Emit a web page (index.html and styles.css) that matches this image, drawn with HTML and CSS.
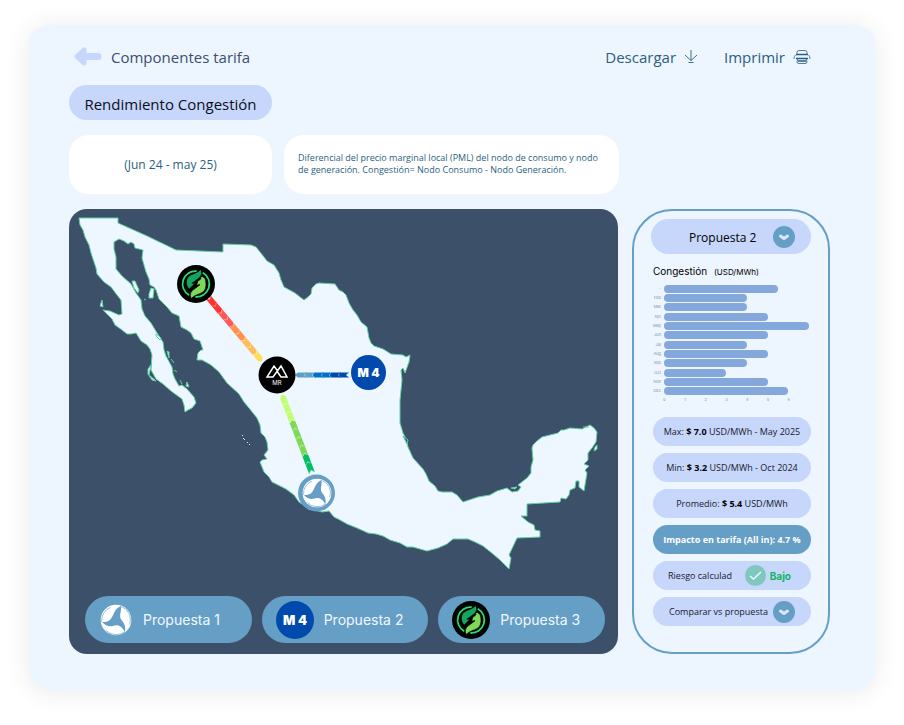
FILE: index.html
```html
<!DOCTYPE html>
<html lang="es">
<head>
<meta charset="utf-8">
<meta name="viewport" content="width=device-width, initial-scale=1">
<title>Rendimiento Congestión</title>
<link rel="stylesheet" href="styles.css">
</head>
<body>
<svg class="sprites" aria-hidden="true">
  <symbol id="logo-leaf" viewBox="-56 -56 112 112">
    <circle r="56" fill="#000"/>
    <path d="M2 -38 A38 38 0 0 0 -20 33 M-2 38 A38 38 0 0 0 20 -33" fill="none" stroke="#1fe07a" stroke-width="5"/>
    <path d="M14 -43 C20 -30 15 -21 5 -15 L-12 -2 L-2 -3 L-20 15 C-31 4 -31 -12 -22 -22 C-14 -30 6 -32 14 -43Z" fill="#12a65f" stroke="#000" stroke-width="2"/>
    <path d="M-14 43 C-20 30 -15 21 -5 15 L12 2 L2 3 L6 -10 C14 -12 17 -17 12 -22 C20 -24 29 -18 29 -6 C31 8 28 18 20 24 C10 31 -6 32 -14 43Z" fill="#7ed957" stroke="#000" stroke-width="2"/>
  </symbol>
  <symbol id="logo-m4" viewBox="-56 -56 112 112">
    <circle r="56" fill="#004aad"/>
    <text class="m4-text" x="0" y="14" text-anchor="middle">M 4</text>
  </symbol>
  <symbol id="logo-rotor" viewBox="-47 -47 94 94">
    <circle r="45" fill="#fff"/>
    <path d="M14 -41 C17 -26 9 -15 14 -4 C19 5 31 13 26 36 C17 16 3 13 -8 17 C-20 21 -31 17 -41 6 C-29 7 -19 5 -12 -8 C-5 -20 -4 -32 14 -41Z" fill="#659fc5"/>
    <path d="M14 -40 A41 41 0 0 1 40 13 M26 35 A43 43 0 0 1 -30 30 M-42 6 A41 41 0 0 1 -16 -37" fill="none" stroke="#659fc5" stroke-width="2"/>
  </symbol>
  <symbol id="icon-heart" viewBox="0 0 22 22">
    <circle cx="11" cy="11" r="11" fill="#659fc5"/>
    <path d="M7.500 10 L11 12.500 L14.500 10" fill="none" stroke="#dbe6ff" stroke-width="3" stroke-linecap="round" stroke-linejoin="round"/>
  </symbol>
  <symbol id="chevron" viewBox="0 -3 12 6" overflow="visible">
    <path d="M0 -3 H9.300 L12 0 L9.300 3 H0 L2.700 0Z"/>
    <path d="M.8 -2.200 L3 0 L.8 2.200" fill="none" stroke="#fff" stroke-opacity=".5" stroke-width=".7"/>
  </symbol>
</svg>

<main class="card">
  <header class="topbar">
    <a class="back" href="#">
      <svg width="28" height="20" viewBox="0 0 28 20" aria-hidden="true"><path d="M3 9.500 L10 3 V16Z" fill="#c7d6fb" stroke="#c7d6fb" stroke-width="5" stroke-linejoin="round"/><path d="M8 9.500 H24" stroke="#c7d6fb" stroke-width="7" stroke-linecap="round"/></svg>
      <span>Componentes tarifa</span>
    </a>
    <div class="actions">
      <button type="button">Descargar
        <svg width="14" height="16" viewBox="0 0 14 16" aria-hidden="true"><path d="M7 1 V11.500 M1 6 L7 11.500 L13 6 M4.500 13.500 H9.500" fill="none" stroke="currentColor" stroke-width=".9"/></svg>
      </button>
      <button type="button">Imprimir
        <svg width="18" height="16" viewBox="0 0 18 16" aria-hidden="true"><g fill="none" stroke="currentColor"><path d="M4 5 V3.500 Q4 1.500 6 1.500 H12 Q14 1.500 14 3.500 V5" stroke-width=".8"/><path d="M3 5.500 H15" stroke-width="1.500"/><path d="M2.500 6 Q1 7 1 10 M15.500 6 Q17 7 17 10" stroke-width=".8"/><path d="M3 9.500 H15 M5 12 H13" stroke-width="1.500"/><path d="M5 9 L4 13 Q4 14.500 6 14.500 H12 Q14 14.500 14 13 L13 9" stroke-width=".8"/></g></svg>
      </button>
    </div>
  </header>

  <h1 class="title">Rendimiento Congestión</h1>

  <section class="info">
    <p class="period">(Jun 24 - may 25)</p>
    <p class="note">Diferencial del precio marginal local (PML) del nodo de consumo y nodo de generación. Congestión= Nodo Consumo - Nodo Generación.</p>
  </section>

  <div class="content">
    <section class="map-panel">
      <svg class="map" viewBox="69 209 549 387" role="img" aria-label="Mapa de nodos">
        <g fill="#eef6ff" stroke="#5fd3a0" stroke-width="1" stroke-linejoin="round">
          <path d="M79 218 L118 218 118 223 147 236 176 250 223 252 223 244 251 245 256 247 264 257 267 261 274 265 279 273 281 280 284 287 295 293 300 297 304 300 308 297 311 294 312 288 316 284 319 283 335 284 339 290 343 292 346 295 349 303 353 310 357 315 361 322 367 327 369 338 371 343 374 346 383 349 391 354 403 355 406 357 410 355 409 362 405 373 403 368 401 370 402 380 400 400 400 423 403 433 406 439 408 447 413 458 423 469 426 474 429 481 435 486 438 491 442 492 452 492 457 495 463 502 478 497 490 495 497 491 507 488 512 492 518 491 521 487 518 485 527 478 531 473 531 467 533 460 532 448 533 445 537 441 542 437 558 433 561 430 564 430 570 428 582 429 590 425 594 428 597 432 596 442 592 448 588 453 588 460 584 464 589 466 585 470 587 473 584 491 579 487 579 481 576 481 575 488 570 490 569 495 566 499 561 498 560 502 527 504 527 516 521 516 528 522 534 525 535 530 540 531 540 537 517 538 509 555 511 558 509 569 500 560 493 554 483 546 475 542 468 539 453 539 447 544 438 548 427 551 413 547 407 547 400 543 390 540 383 536 376 534 368 533 357 528 347 524 340 520 334 517 329 511 322 512 308 508 299 502 294 495 286 489 272 482 269 477 264 472 260 462 262 460 267 459 264 455 268 450 267 442 265 437 261 433 260 425 257 418 249 408 244 402 239 394 227 383 219 372 211 365 202 360 197 360 198 353 201 350 203 350 200 341 194 339 191 333 187 330 181 327 179 316 172 313 167 307 159 299 156 290 154 287 150 285 149 279 146 272 142 258 143 250 139 249 135 248 134 244 131 242 128 244 124 241 119 239 114 242 114 249 116 257 116 269 122 276 131 284 136 293 141 300 142 309 145 316 151 323 157 333 163 342 164 350 166 356 172 367 173 374 175 379 179 386 182 385 187 389 194 397 196 403 192 408 188 410 185 412 184 405 182 399 171 391 163 384 156 379 151 370 152 355 150 349 147 345 141 341 136 333 131 334 127 334 122 330 115 325 112 319 103 310 110 311 119 315 122 314 121 300 117 295 111 287 104 282 97 274 96 268 93 259 91 253 89 245 85 237 83 230 80 225Z"/>
          <path d="M132 281 L135 281 139 290 138 293 134 288Z"/>
          <path d="M151 288 L154 289 153 298 149 298 149 294Z"/>
          <path d="M100 306 L102 300 103 307Z"/>
          <path d="M156 334 L161 338 160 340 156 336Z"/>
          <path d="M148 369 L151 365 149 375 156 381 152 380 148 374Z"/>
          <path d="M167 351 L169 352 169 358Z M171 359 L174 363 M174 370 L177 372 M180 380 L182 384 M187 382 L189 387 186 386Z M144 299 L146 300"/>
          <path d="M242 435 L243 436 M243 438 L245 440 M247 442 L248 443 M249 444 L250 445" stroke="#c9f3df"/>
          <path d="M595 447 L597 445 597 449 594 451Z"/>
          <path d="M511 488 L517 487 515 489Z"/>
          <path d="M403 436 L408 440 407 444Z M583 427 L589 427" fill="#3c506a"/>
        </g>
        <g transform="translate(208 297) rotate(50)">
          <g fill="#ff3131"><use href="#chevron" width="12" height="6" y="-3"/><use href="#chevron" width="12" height="6" x="9" y="-3"/></g>
          <g fill="#ff5757"><use href="#chevron" width="12" height="6" x="18" y="-3"/><use href="#chevron" width="12" height="6" x="27" y="-3"/></g>
          <g fill="#ff914d"><use href="#chevron" width="12" height="6" x="36" y="-3"/><use href="#chevron" width="12" height="6" x="45" y="-3"/></g>
          <g fill="#ffbd59"><use href="#chevron" width="12" height="6" x="54" y="-3"/><use href="#chevron" width="12" height="6" x="63" y="-3"/></g>
          <g fill="#ffde59"><use href="#chevron" width="12" height="6" x="72" y="-3"/></g>
        </g>
        <g transform="translate(349 375) rotate(180) scale(1 .8)">
          <g fill="#004aad"><use href="#chevron" width="12" height="6" y="-3"/><use href="#chevron" width="12" height="6" x="8" y="-3"/></g>
          <g fill="#0072c6"><use href="#chevron" width="12" height="6" x="17" y="-3"/><use href="#chevron" width="12" height="6" x="25" y="-3"/></g>
          <g fill="#5f9ec6"><use href="#chevron" width="12" height="6" x="34" y="-3"/><use href="#chevron" width="12" height="6" x="42" y="-3"/></g>
        </g>
        <g transform="translate(312 473) rotate(-111)">
          <g fill="#00bf63"><use href="#chevron" width="12" height="6" y="-3"/><use href="#chevron" width="12" height="6" x="9" y="-3"/></g>
          <g fill="#7ed957"><use href="#chevron" width="12" height="6" x="18" y="-3"/><use href="#chevron" width="12" height="6" x="27" y="-3"/><use href="#chevron" width="12" height="6" x="36" y="-3"/><use href="#chevron" width="12" height="6" x="45" y="-3"/></g>
          <g fill="#c1ff72"><use href="#chevron" width="12" height="6" x="54" y="-3"/><use href="#chevron" width="12" height="6" x="63" y="-3"/><use href="#chevron" width="12" height="6" x="72" y="-3"/></g>
        </g>
        <use href="#logo-leaf" x="177" y="265" width="38" height="38"/>
        <circle cx="277" cy="375" r="18.500" fill="#000"/>
        <path d="M278 371.500 L274 366 L267 377 H273 L281 366 L287 377 H281 L277.500 372" fill="none" stroke="#fff" stroke-width="1.500"/>
        <text class="mr-text" x="277" y="385" text-anchor="middle">MR</text>
        <use href="#logo-m4" x="351" y="355" width="35" height="35"/>
        <circle cx="316.500" cy="493" r="18.500" fill="#659fc5"/>
        <use href="#logo-rotor" x="302" y="478" width="30" height="30"/>
      </svg>
      <nav class="proposals">
        <button type="button"><svg width="34" height="32" aria-hidden="true"><use href="#logo-rotor"/></svg><span>Propuesta 1</span></button>
        <button type="button"><svg width="38" height="38" aria-hidden="true"><use href="#logo-m4"/></svg><span>Propuesta 2</span></button>
        <button type="button"><svg width="38" height="38" aria-hidden="true"><use href="#logo-leaf"/></svg><span>Propuesta 3</span></button>
      </nav>
    </section>

    <aside class="side">
      <div class="picker picker-main">
        <select aria-label="Propuesta"><option>Propuesta 2</option></select>
        <svg width="22" height="22" aria-hidden="true"><use href="#icon-heart"/></svg>
      </div>
      <h2 class="chart-title">Congestión <small>(USD/MWh)</small></h2>
      <div class="chart">
        <ol class="bars">
          <li><span>-</span><i style="--v:5.5"></i></li>
          <li><span>Feb</span><i style="--v:4"></i></li>
          <li><span>Mar</span><i style="--v:4"></i></li>
          <li><span>Apr</span><i style="--v:5"></i></li>
          <li><span>May</span><i style="--v:7"></i></li>
          <li><span>Jun</span><i style="--v:5"></i></li>
          <li><span>Jul</span><i style="--v:4"></i></li>
          <li><span>Aug</span><i style="--v:5"></i></li>
          <li><span>Sep</span><i style="--v:4"></i></li>
          <li><span>Oct</span><i style="--v:3"></i></li>
          <li><span>Nov</span><i style="--v:5"></i></li>
          <li><span>Dec</span><i style="--v:6"></i></li>
        </ol>
        <div class="axis"><span>0</span><span>1</span><span>2</span><span>3</span><span>4</span><span>5</span><span>6</span></div>
      </div>
      <div class="stats">
        <p>Max: <b>$ 7.0</b> USD/MWh - May 2025</p>
        <p>Min: <b>$ 3.2</b> USD/MWh - Oct 2024</p>
        <p>Promedio: <b>$ 5.4</b> USD/MWh</p>
        <p class="impact">Impacto en tarifa (All in): 4.7 %</p>
        <p class="risk"><span>Riesgo calculad</span><svg width="21" height="21" viewBox="0 0 21 21" aria-hidden="true"><circle cx="10.500" cy="10.500" r="10.500" fill="#7fc8bd"/><path d="M5 11 L8.500 14 L16 7" fill="none" stroke="#f1f6ff" stroke-width="1.500"/></svg><strong>Bajo</strong></p>
        <div class="picker">
          <select aria-label="Comparar vs propuesta"><option>Comparar vs propuesta</option></select>
          <svg width="22" height="22" aria-hidden="true"><use href="#icon-heart"/></svg>
        </div>
      </div>
    </aside>
  </div>
</main>
</body>
</html>
```

FILE: styles.css
```css
:root {
  --ice: #edf5ff;
  --lilac: #c7d6fb;
  --steel: #659fc5;
  --navy: #3c506a;
  --teal: #2b5f80;
  --round: Inter, "Liberation Sans", sans-serif;
}

* { box-sizing: border-box; }

body {
  margin: 0;
  padding: 25px 29px 35px;
  background: #fff;
  font-family: "Open Sans", "Noto Sans", sans-serif;
}

h1, h2, p, ol { margin: 0; padding: 0; font-weight: 400; }
button, select { border: 0; font: inherit; color: inherit; background: none; }
.sprites { display: none; }

.card {
  padding: 12px 45px 36px 40px;
  border-radius: 20px;
  background: var(--ice);
  box-shadow: 0 2px 24px rgba(40, 50, 80, .1);
}

.topbar {
  display: flex;
  justify-content: space-between;
  align-items: center;
  height: 40px;
  padding: 0 19px 0 5px;
  font-size: 15px;
}
.back {
  display: flex;
  align-items: center;
  gap: 9px;
  color: var(--navy);
  text-decoration: none;
}
.actions { display: flex; gap: 26px; }
.actions button {
  display: flex;
  align-items: center;
  gap: 8px;
  padding: 0;
  color: var(--teal);
}

.title {
  display: flex;
  align-items: center;
  justify-content: center;
  width: 203px;
  height: 35px;
  margin-top: 8px;
  padding-top: 2px;
  border-radius: 18px;
  background: var(--lilac);
  color: #0c0f1a;
  font-size: 15px;
}

.info {
  display: grid;
  grid-template-columns: 203px 335px;
  gap: 12px;
  margin: 15px 0;
  color: var(--teal);
}
.info p {
  display: flex;
  align-items: center;
  min-height: 59px;
  border-radius: 20px;
  background: #fff;
}
.info .period { justify-content: center; font-size: 12px; }
.info .note { padding: 0 14px 2px; font-size: 9px; line-height: 12px; }

.content {
  display: grid;
  grid-template-columns: minmax(0, 1fr) 198px;
  gap: 14px;
}

.map-panel {
  border-radius: 18px;
  background: var(--navy);
  overflow: hidden;
}
.map { display: block; width: 100%; height: auto; }
.m4-text { fill: #fff; font: 900 38px Inter, sans-serif; }
.mr-text { fill: #fff; font: 400 6px Inter, sans-serif; }

.proposals {
  display: grid;
  grid-template-columns: repeat(3, 1fr);
  gap: 10px;
  padding: 0 13px 11px 16px;
}
.proposals button {
  display: flex;
  align-items: center;
  gap: 10px;
  height: 47px;
  padding: 0 14px;
  border-radius: 24px;
  background: var(--steel);
  color: #f2f8ff;
  font-family: var(--round);
  font-size: 14px;
}

.side {
  padding: 8px 17px;
  border: 2px solid var(--steel);
  border-radius: 40px;
}

.picker {
  position: relative;
  height: 29px;
  border-radius: 18px;
  background: var(--lilac);
}
.picker select {
  width: 100%;
  height: 100%;
  padding: 0 0 0 16px;
  appearance: none;
  font-size: 9px;
}
.picker svg {
  position: absolute;
  top: 50%;
  right: 16px;
  transform: translateY(-50%);
  pointer-events: none;
}
.picker-main { height: 35px; }
.picker-main select { padding: 1px 0 0 38px; font-size: 12px; }

.chart-title {
  margin-top: 10px;
  padding-left: 2px;
  font-family: var(--round);
  font-size: 10px;
  line-height: 14px;
}
.chart-title small { margin-left: 4px; font-size: 8px; }

.chart { padding: 5px 2px 0 0; color: #8592a8; font: 4px/8px var(--round); }
.bars { display: grid; grid-template-rows: repeat(12, 1fr); height: 112px; list-style: none; }
.bars li { display: grid; grid-template-columns: 10px 1fr; gap: 3px; align-items: center; }
.bars span { text-align: right; }
.bars i {
  width: calc(var(--v) / 7 * 100%);
  height: 8px;
  border-radius: 4px;
  background: #84a8dc;
}
.axis { display: grid; grid-template-columns: repeat(7, 1fr); margin-left: 3px; padding-right: 10px; text-align: center; }

.stats {
  display: grid;
  gap: 7px;
  margin-top: 13px;
  padding-left: 2px;
  color: #151b29;
  font-size: 9px;
}
.stats p {
  display: flex;
  align-items: center;
  justify-content: center;
  height: 29px;
  border-radius: 15px;
  background: var(--lilac);
  white-space: pre;
}
.stats b { color: #000; }
.stats .impact { background: var(--steel); color: #fff; font-weight: 700; }
.stats .risk { justify-content: flex-start; gap: 4px; padding: 0 20px 0 15px; }
.risk svg { margin-left: auto; }
.risk strong { color: #0eb566; font: 700 10px var(--round); }
```
